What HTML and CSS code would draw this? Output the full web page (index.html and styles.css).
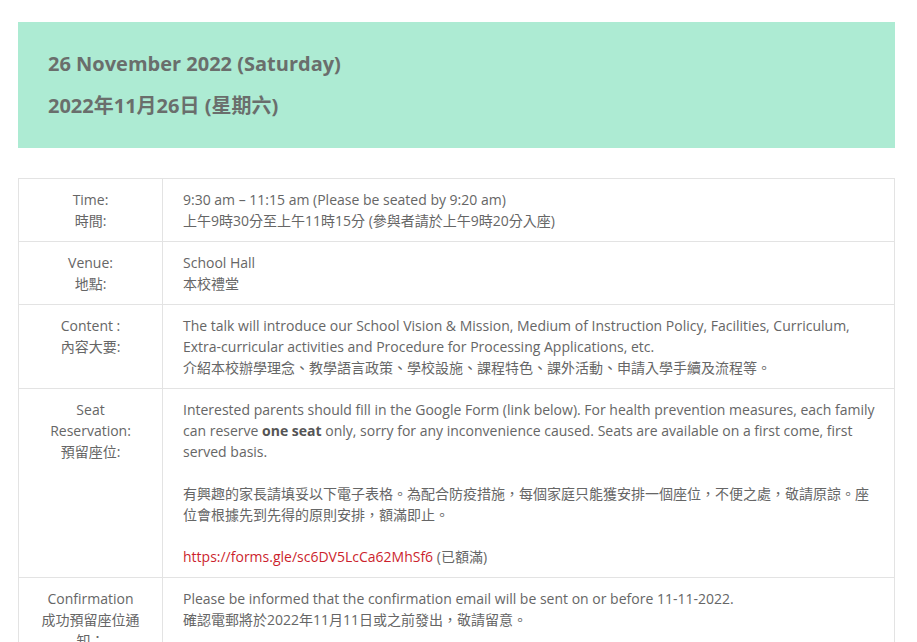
FILE: index.html
```html
<!DOCTYPE html>
<html lang="zh-Hant">
<head>
  <meta charset="UTF-8" />
  <meta name="viewport" content="width=device-width, initial-scale=1.0"/>
  <title>Admission Talk</title>
  <link rel="stylesheet" href="styles.css">
</head>
<body>
  <div class="page">
    <div class="date-box">
      <h3>26 November 2022 (Saturday)</h3>
      <h3>2022年11月26日 (星期六)</h3>
    </div>

    <table class="info">
      <tr>
        <td class="label">Time:<br>時間:</td>
        <td>9:30 am – 11:15 am (Please be seated by 9:20 am)<br>上午9時30分至上午11時15分 (參與者請於上午9時20分入座)</td>
      </tr>
      <tr>
        <td class="label">Venue:<br>地點:</td>
        <td>School Hall<br>本校禮堂</td>
      </tr>
      <tr>
        <td class="label">Content :<br>內容大要:</td>
        <td>The talk will introduce our School Vision &amp; Mission, Medium of Instruction Policy, Facilities, Curriculum, Extra-curricular activities and Procedure for Processing Applications, etc.<br>介紹本校辦學理念、教學語言政策、學校設施、課程特色、課外活動、申請入學手續及流程等。</td>
      </tr>
      <tr>
        <td class="label">Seat Reservation:<br>預留座位:</td>
        <td>
          <p>Interested parents should fill in the Google Form (link below). For health prevention measures, each family can reserve <strong>one seat</strong> only, sorry for any inconvenience caused. Seats are available on a first come, first served basis.</p>
          <p>有興趣的家長請填妥以下電子表格。為配合防疫措施，每個家庭只能獲安排一個座位，不便之處，敬請原諒。座位會根據先到先得的原則安排，額滿即止。</p>
          <p><a href="#">https://forms.gle/sc6DV5LcCa62MhSf6</a> (已額滿)</p>
        </td>
      </tr>
      <tr>
        <td class="label">Confirmation<br>成功預留座位通知：</td>
        <td>Please be informed that the confirmation email will be sent on or before 11-11-2022.<br>確認電郵將於2022年11月11日或之前發出，敬請留意。</td>
      </tr>
    </table>
  </div>
</body>
</html>
```

FILE: styles.css
```css
body {
  margin: 0;
  font-family: 'Open Sans', 'Noto Sans CJK TC', sans-serif;
  font-size: 14px;
  line-height: 21px;
  color: #666;
  background: #fff;
}

.page {
  margin: 22px 22px 0 18px;
}

.date-box {
  background-color: #adebd3;
  padding: 28px 30px;
}

.date-box h3 {
  margin: 0 0 14px;
  font-size: 20px;
  line-height: 28px;
  font-weight: 700;
  color: #6a6e6c;
}

.date-box h3:last-child {
  margin-bottom: 0;
}

.info {
  width: 100%;
  margin-top: 30px;
  border-collapse: collapse;
}

.info td {
  border: 1px solid #e3e3e3;
  padding: 10px 14px 10px 20px;
  vertical-align: top;
}

.info td.label {
  width: 103px;
  padding-right: 20px;
  text-align: center;
}

.info p {
  margin: 0 0 21px;
}

.info p:last-child {
  margin-bottom: 0;
}

.info strong {
  font-weight: 700;
  color: #555;
}

.info a {
  color: #cc1f2d;
  text-decoration: none;
}
```
